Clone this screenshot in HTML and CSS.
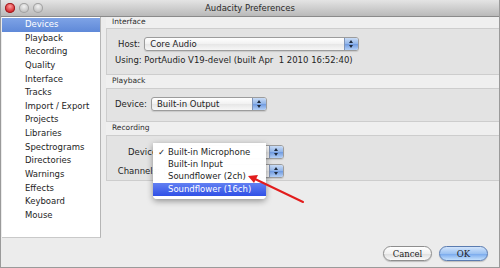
FILE: index.html
```html
<!DOCTYPE html>
<html lang="en">
<head>
  <meta charset="UTF-8">
  <title>Audacity Preferences</title>
  <link rel="stylesheet" href="styles.css">
</head>
<body>
  <div class="window">
    <div class="titlebar">
      <div class="lights">
        <span class="light close"></span>
        <span class="light"></span>
        <span class="light"></span>
      </div>
      <div class="title">Audacity Preferences</div>
    </div>

    <div class="main">
      <ul class="sidebar">
        <li class="active">Devices</li>
        <li>Playback</li>
        <li>Recording</li>
        <li>Quality</li>
        <li>Interface</li>
        <li>Tracks</li>
        <li>Import / Export</li>
        <li>Projects</li>
        <li>Libraries</li>
        <li>Spectrograms</li>
        <li>Directories</li>
        <li>Warnings</li>
        <li>Effects</li>
        <li>Keyboard</li>
        <li>Mouse</li>
      </ul>

      <div class="content">
        <div class="group-label first">Interface</div>
        <div class="group group-interface">
          <div class="row">
            <span class="label">Host:</span>
            <div class="select host"><span class="value">Core Audio</span><span class="stepper"></span></div>
          </div>
          <div class="info">Using: PortAudio V19-devel (built Apr&nbsp; 1 2010 16:52:40)</div>
        </div>

        <div class="group-label">Playback</div>
        <div class="group group-playback">
          <div class="row">
            <span class="label">Device:</span>
            <div class="select output"><span class="value">Built-in Output</span><span class="stepper"></span></div>
          </div>
        </div>

        <div class="group-label">Recording</div>
        <div class="group group-recording">
          <div class="row">
            <span class="label wide">Device:</span>
            <div class="select input"><span class="value"></span><span class="stepper"></span></div>
          </div>
          <div class="row">
            <span class="label wide">Channels:</span>
            <div class="select input"><span class="value"></span><span class="stepper"></span></div>
          </div>
        </div>

        <div class="buttons">
          <button class="btn">Cancel</button>
          <button class="btn default">OK</button>
        </div>
      </div>
    </div>

    <ul class="popup">
      <li class="checked">Built-in Microphone</li>
      <li>Built-in Input</li>
      <li>Soundflower (2ch)</li>
      <li class="hover">Soundflower (16ch)</li>
    </ul>

    <svg class="arrow" width="500" height="268" viewBox="0 0 500 268">
      <line x1="302" y1="202" x2="254" y2="179" stroke="#e21d1d" stroke-width="2" stroke-linecap="round"/>
      <polygon points="247,176 257,175 253,183" fill="#e21d1d"/>
    </svg>
  </div>
</body>
</html>
```

FILE: styles.css
```css
body {
  margin: 0;
  font-family: "DejaVu Sans", Verdana, sans-serif;
  font-size: 8.5px;
  color: #1e1e1e;
}

.window {
  position: relative;
  width: 500px;
  height: 268px;
  box-sizing: border-box;
  display: flex;
  flex-direction: column;
  background: #ececec;
  border: 1px solid #9a9a9a;
  border-top: none;
  overflow: hidden;
}

.titlebar {
  height: 16px;
  display: grid;
  align-items: center;
  background: linear-gradient(#e4e4e4, #b9b9b9);
  border-bottom: 1px solid #8a8a8a;
}

.lights,
.title {
  grid-area: 1 / 1;
}

.lights {
  justify-self: start;
  display: flex;
  gap: 4px;
  padding-left: 4px;
}

.light {
  width: 10px;
  height: 10px;
  border-radius: 50%;
  background: radial-gradient(circle at 50% 35%, #f2f2f2, #bdbdbd 70%, #9d9d9d);
  box-shadow: inset 0 0 0 1px #a2a2a2;
}

.light.close {
  background: radial-gradient(circle at 50% 35%, #ff9d9d, #d4262a 65%, #981014);
  box-shadow: inset 0 0 0 1px #9c1f22;
}

.title {
  justify-self: center;
  font-size: 8.5px;
  color: #2a2a2a;
}

.main {
  flex: 1;
  display: flex;
}

.sidebar {
  list-style: none;
  margin: 0 0 0 1px;
  padding: 1px 0 0 0;
  width: 99px;
  height: 221px;
  box-sizing: border-box;
  background: #fff;
  border-right: 1px solid #b5b5b5;
  border-bottom: 1px solid #c9c9c9;
}

.sidebar li {
  height: 13.65px;
  line-height: 13.65px;
  padding-left: 23px;
}

.sidebar li.active {
  background: linear-gradient(#7ea3e6, #5f89d8);
  color: #fff;
}

.content {
  flex: 1;
  display: flex;
  flex-direction: column;
  padding-left: 5px;
}

.group-label {
  height: 13px;
  line-height: 12px;
  padding-left: 6px;
  font-size: 7.5px;
  color: #2c2c2c;
  background: #efefef;
}

.group-label.first {
  height: 11px;
  line-height: 10px;
}

.group {
  box-sizing: border-box;
  background: #e3e3e3;
  border: 1px solid #cdcdcd;
  border-right: none;
  padding-left: 11px;
}

.group-interface {
  height: 47px;
  padding-top: 8px;
}

.group-playback {
  height: 34px;
  padding-top: 8px;
  padding-left: 8px;
}

.group-recording {
  height: 46px;
  padding-top: 9px;
  padding-left: 8px;
  display: flex;
  flex-direction: column;
  gap: 5px;
}

.row {
  display: flex;
  align-items: center;
  gap: 4px;
}

.label.wide {
  width: 45px;
  text-align: right;
}

.info {
  margin-top: 3px;
  margin-left: -3px;
  height: 12px;
  line-height: 12px;
}

.select {
  height: 14px;
  box-sizing: border-box;
  display: flex;
  align-items: center;
  background: linear-gradient(#ffffff, #f1f1f1 50%, #e6e6e6 51%, #f7f7f7);
  border: 1px solid #9c9c9c;
  border-radius: 3px;
  box-shadow: 0 1px 1px rgba(0, 0, 0, 0.12);
}

.select .value {
  flex: 1;
  padding-left: 5px;
}

.select.host {
  width: 215px;
}

.select.output {
  width: 116px;
}

.select.input {
  width: 120px;
}

.stepper {
  position: relative;
  width: 13px;
  height: 12px;
  border-left: 1px solid #7f94b8;
  border-radius: 0 2px 2px 0;
  background: linear-gradient(#c9dcf6, #8fb3e8 50%, #6f9ae0 51%, #b4d0f6);
}

.stepper::before,
.stepper::after {
  content: "";
  position: absolute;
  left: 4px;
  border-left: 2.5px solid transparent;
  border-right: 2.5px solid transparent;
}

.stepper::before {
  top: 2px;
  border-bottom: 3px solid #1f2a3c;
}

.stepper::after {
  bottom: 2px;
  border-top: 3px solid #1f2a3c;
}

.buttons {
  margin-top: auto;
  margin-bottom: 6px;
  padding-right: 11px;
  display: flex;
  justify-content: flex-end;
  gap: 7px;
}

.btn {
  width: 49px;
  height: 15px;
  padding: 0;
  font-family: "DejaVu Serif", serif;
  font-size: 8.5px;
  color: #222;
  border: 1px solid #8e8e8e;
  border-radius: 8px;
  background: linear-gradient(#ffffff, #f0f0f0 50%, #dedede 51%, #fafafa);
  box-shadow: 0 1px 1px rgba(0, 0, 0, 0.2);
}

.btn.default {
  border-color: #5a7bb0;
  background: linear-gradient(#d2e4fb, #9cc2f2 50%, #74a6ec 51%, #c4e0fc);
}

.popup {
  position: absolute;
  left: 152px;
  top: 143px;
  width: 113px;
  margin: 0;
  padding: 3px 0;
  list-style: none;
  background: rgba(255, 255, 255, 0.98);
  border-radius: 0 0 4px 4px;
  box-shadow: 0 2px 6px rgba(0, 0, 0, 0.4);
}

.popup li {
  height: 12px;
  line-height: 12px;
  padding-left: 15px;
  position: relative;
  white-space: nowrap;
}

.popup li.checked::before {
  content: "\2713";
  position: absolute;
  left: 5px;
}

.popup li.hover {
  margin-top: 1px;
  height: 13px;
  line-height: 13px;
  color: #fff;
  background: linear-gradient(#6280f2, #3050e6);
}

.arrow {
  position: absolute;
  left: 0;
  top: 0;
  pointer-events: none;
}
```
